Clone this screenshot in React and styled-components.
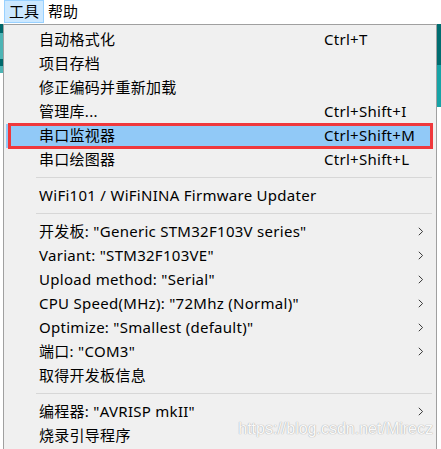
import React from "react";
import styled, { createGlobalStyle } from "styled-components";

const GlobalStyle = createGlobalStyle`
  html, body { margin: 0; padding: 0; background: #ffffff; }
  body {
    font-family: "Noto Sans", "Noto Sans CJK SC", sans-serif;
    font-size: 15px;
    color: #000;
    overflow: hidden;
  }
`;

const Page = styled.div`
  width: 441px;
  height: 449px;
  display: flex;
  flex-direction: column;
  overflow: hidden;
  background: #fff;
`;

const MenuBar = styled.div`
  height: 24px;
  display: flex;
  align-items: stretch;
  padding-left: 4px;
  flex-shrink: 0;
`;

const BarItem = styled.div`
  display: flex;
  align-items: center;
  padding: 0 4px 1px;
  height: 23px;
  box-sizing: border-box;
  border: 1px solid ${(p) => (p.$open ? "#99d1ff" : "transparent")};
  background: ${(p) => (p.$open ? "#cce8ff" : "transparent")};
  margin-left: ${(p) => (p.$open ? "0" : "-1px")};
  line-height: 1;
`;

const Body = styled.div`
  flex: 1;
  display: flex;
  align-items: stretch;
  min-height: 0;
`;

const Edge = styled.div`
  width: ${(p) => p.$w}px;
  display: flex;
  flex-direction: column;
  flex-shrink: 0;
`;

const Stripe = styled.div`
  height: ${(p) => p.$h}px;
  background: ${(p) => p.$c};
  flex-shrink: 0;
`;

const Panel = styled.div`
  position: relative;
  width: 434px;
  box-sizing: border-box;
  border: 1px solid #a0a0a0;
  border-bottom: none;
  background: #f0f0f0;
  padding: 3px 4px 0 2px;
  flex-shrink: 0;
`;

const Row = styled.div`
  position: relative;
  height: 24px;
  display: grid;
  grid-template-columns: 285px 1fr 14px;
  align-items: center;
  padding-left: 33px;
  background: ${(p) => (p.$active ? "#91c9f7" : "transparent")};
  white-space: nowrap;
  line-height: 1;
  letter-spacing: 0.28px;
  padding-bottom: 1px;
  box-sizing: border-box;
`;

const Outline = styled.div`
  position: absolute;
  left: 2px;
  right: -1px;
  top: -1px;
  bottom: -1px;
  border: 3px solid #f0383c;
  pointer-events: none;
`;

const Label = styled.span``;
const Shortcut = styled.span``;

const Arrow = styled.span`
  display: flex;
  align-items: center;
  justify-content: flex-start;
`;

const Separator = styled.div`
  height: 12px;
  display: flex;
  align-items: flex-start;
  padding: 5px 0 0 30px;
  box-sizing: border-box;
  &::after {
    content: "";
    display: block;
    width: 397px;
    height: 1px;
    background: #d7d7d7;
  }
`;

const Watermark = styled.div`
  position: absolute;
  right: 3px;
  top: 395px;
  font-family: "Liberation Sans", Arial, sans-serif;
  font-size: 16px;
  line-height: 18px;
  color: rgba(255, 255, 255, 0.95);
  text-shadow: 0 0 1px #a8a8a8, 0 0 1px #b8b8b8;
  pointer-events: none;
  white-space: nowrap;
`;

const Chevron = () => (
  <svg width="6" height="9" viewBox="0 0 6 9">
    <polyline points="0.8,0.8 4.6,4.5 0.8,8.2" fill="none" stroke="#3a3a3a" strokeWidth="1" />
  </svg>
);

const items = [
  { label: "自动格式化", sc: "Ctrl+T" },
  { label: "项目存档" },
  { label: "修正编码并重新加载" },
  { label: "管理库...", sc: "Ctrl+Shift+I" },
  { label: "串口监视器", sc: "Ctrl+Shift+M", active: true },
  { label: "串口绘图器", sc: "Ctrl+Shift+L" },
  { sep: true },
  { label: "WiFi101 / WiFiNINA Firmware Updater" },
  { sep: true },
  { label: '开发板: "Generic STM32F103V series"', sub: true },
  { label: 'Variant: "STM32F103VE"', sub: true },
  { label: 'Upload method: "Serial"', sub: true },
  { label: 'CPU Speed(MHz): "72Mhz (Normal)"', sub: true },
  { label: 'Optimize: "Smallest (default)"', sub: true },
  { label: '端口: "COM3"', sub: true },
  { label: "取得开发板信息" },
  { sep: true },
  { label: '编程器: "AVRISP mkII"', sub: true },
  { label: "烧录引导程序" },
];

export default function App() {
  return (
    <Page>
      <GlobalStyle />
      <MenuBar>
        <BarItem $open>工具</BarItem>
        <BarItem>帮助</BarItem>
      </MenuBar>
      <Body>
        <Edge $w={3}>
          <Stripe $h={9} $c="#00686b" />
          <Stripe $h={26} $c="#4db4b5" />
          <Stripe $h={7} $c="#00686b" />
          <Stripe $h={7} $c="#4db4b5" />
        </Edge>
        <Panel>
          {items.map((it, i) =>
            it.sep ? (
              <Separator key={i} />
            ) : (
              <Row key={i} $active={it.active}>
                <Label>{it.label}</Label>
                <Shortcut>{it.sc || ""}</Shortcut>
                <Arrow>{it.sub ? <Chevron /> : null}</Arrow>
                {it.active ? <Outline /> : null}
              </Row>
            )
          )}
          <Watermark>https://blog.csdn.net/Mirecz</Watermark>
        </Panel>
        <Edge $w={4}>
          <Stripe $h={41} $c="#006d70" />
          <Stripe $h={42} $c="#17a3a6" />
        </Edge>
      </Body>
    </Page>
  );
}
